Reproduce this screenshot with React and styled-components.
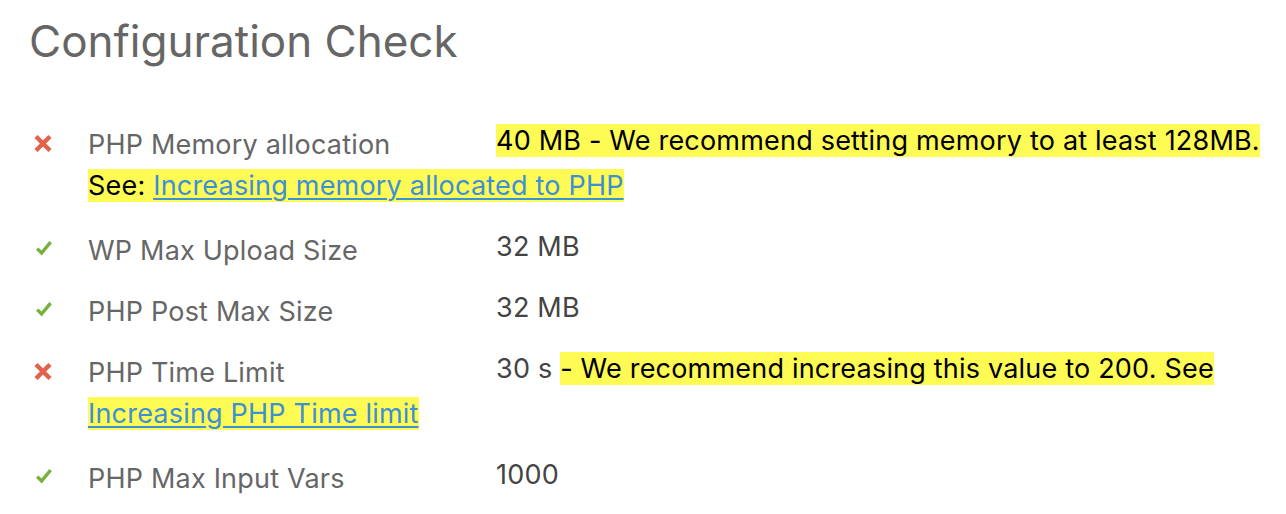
import styled, { createGlobalStyle } from "styled-components";

const GlobalStyle = createGlobalStyle`
  body {
    margin: 0;
    background: #fff;
    font-family: Inter, "Noto Sans", sans-serif;
  }
`;

const Page = styled.div`
  padding: 15px 0 0 29px;
  width: 1250px;
`;

const Title = styled.h1`
  margin: 0 0 50px;
  font-size: 44px;
  font-weight: 400;
  line-height: 1.2;
  color: #666;
`;

const List = styled.div`
  display: flex;
  flex-direction: column;
`;

const Row = styled.div`
  display: flex;
  padding: 0 0 16px;
`;

const IconCell = styled.div`
  flex: none;
  width: 59px;
  height: 45px;
  padding: ${({ $ok }) => ($ok ? "4px 0 0 7px" : "6px 0 0 5px")};
  box-sizing: border-box;
  display: flex;
  align-items: center;
  color: ${({ $ok }) => ($ok ? "#76b13a" : "#e2624b")};
`;

const Body = styled.div`
  flex: 1;
  font-size: 27px;
  letter-spacing: 0.2px;
  line-height: 45px;
  color: #444;
`;

const Label = styled.span`
  display: inline-block;
  width: 408px;
  line-height: 37px;
  color: #666;
  vertical-align: -4px;
`;

const Mark = styled.span`
  background: #fffb55;
  color: #000;
`;

const Link = styled.a`
  color: #3d8fd6;
  text-decoration: underline;
  text-decoration-thickness: 2px;
  text-underline-offset: 3px;
`;

const CrossIcon = () => (
  <svg width="18" height="17" viewBox="0 0 18 17">
    <path
      d="M2 1.5 L16 15.5 M16 1.5 L2 15.5"
      stroke="currentColor"
      strokeWidth="4.4"
      fill="none"
    />
  </svg>
);

const CheckIcon = () => (
  <svg width="16" height="16" viewBox="0 0 16 16">
    <path
      d="M1.2 8.6 L5.6 13 L14.6 2.2"
      stroke="currentColor"
      strokeWidth="3.4"
      fill="none"
    />
  </svg>
);

const checks = [
  {
    ok: false,
    label: "PHP Memory allocation",
    value: (
      <Mark>
        40 MB - We recommend setting memory to at least 128MB. See:{" "}
        <Link href="#">Increasing memory allocated to PHP</Link>
      </Mark>
    ),
  },
  { ok: true, label: "WP Max Upload Size", value: "32 MB" },
  { ok: true, label: "PHP Post Max Size", value: "32 MB" },
  {
    ok: false,
    label: "PHP Time Limit",
    value: (
      <>
        30 s{" "}
        <Mark>
          - We recommend increasing this value to 200. See{" "}
          <Link href="#">Increasing PHP Time limit</Link>
        </Mark>
      </>
    ),
  },
  { ok: true, label: "PHP Max Input Vars", value: "1000" },
];

export default function App() {
  return (
    <Page>
      <GlobalStyle />
      <Title>Configuration Check</Title>
      <List>
        {checks.map((c) => (
          <Row key={c.label}>
            <IconCell $ok={c.ok}>{c.ok ? <CheckIcon /> : <CrossIcon />}</IconCell>
            <Body>
              <Label>{c.label}</Label>
              {c.value}
            </Body>
          </Row>
        ))}
      </List>
    </Page>
  );
}
